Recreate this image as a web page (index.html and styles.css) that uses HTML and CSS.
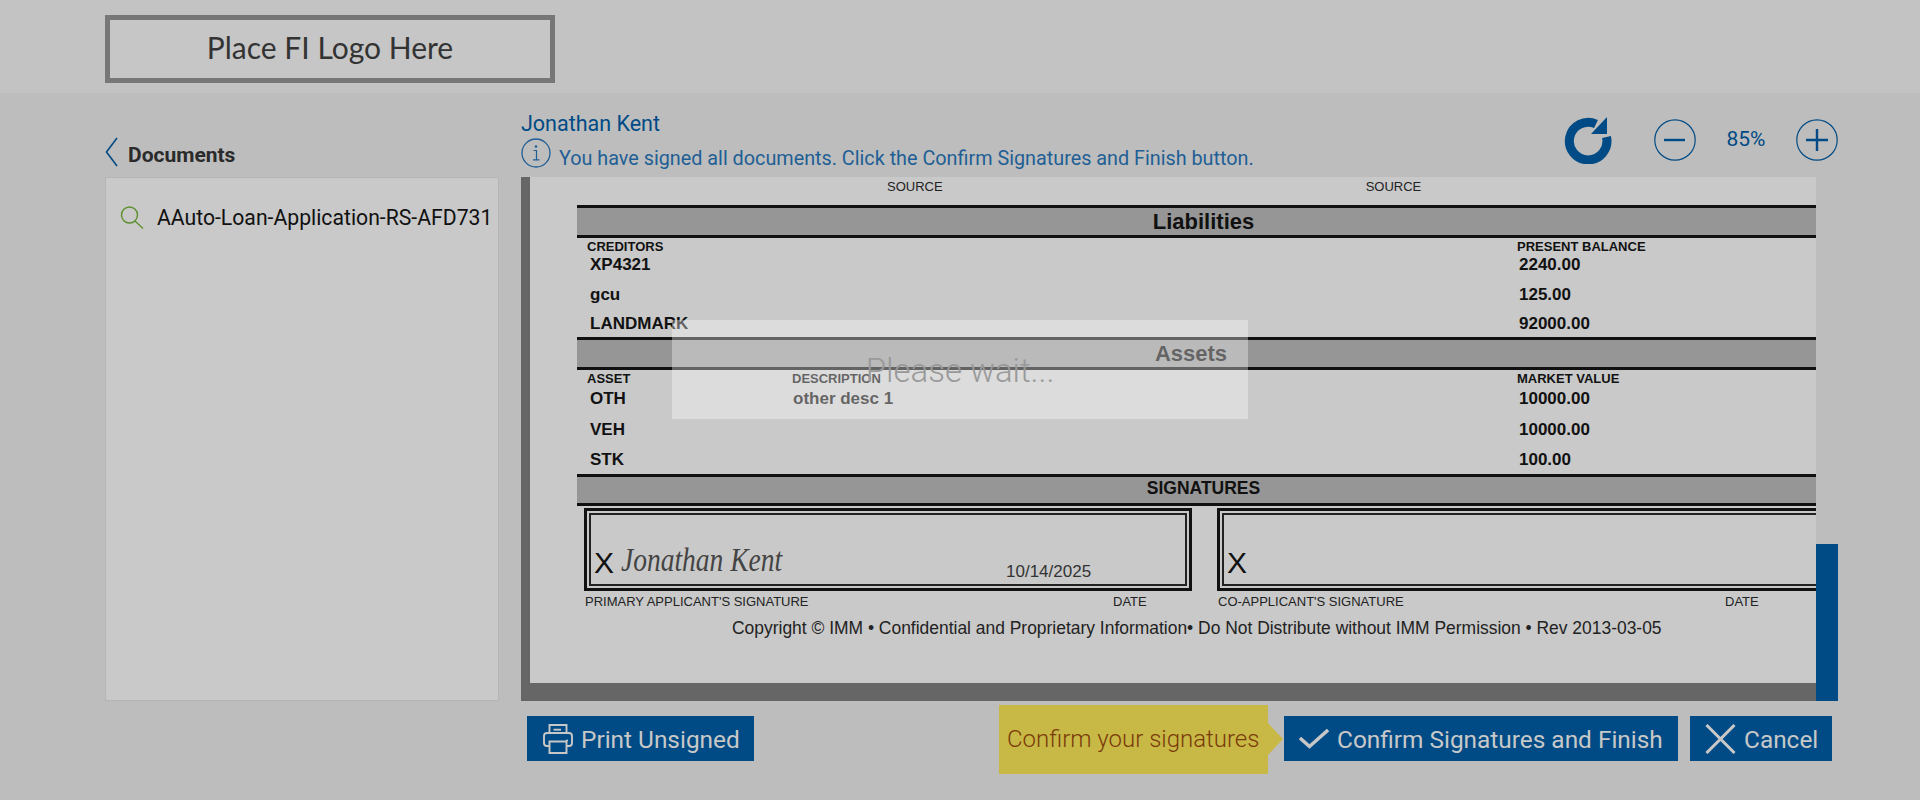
FILE: index.html
```html
<!DOCTYPE html>
<html lang="en">

<head>
    <meta charset="UTF-8">
    <meta name="viewport" content="width=device-width, initial-scale=1.0">
    <title>Sign Documents</title>

    <link rel="stylesheet" href="styles.css">
</head>

<body>
    <header class="topBar">
        <div class="logoBox">Place FI Logo Here</div>
    </header>

    <div class="mainArea">
        <!-- left column -->
        <aside class="sideCol">
            <div class="sideHead">
                <svg class="backIcon" width="13" height="30" viewBox="0 0 13 30">
                    <path d="M12 1 L1.5 15 L12 29" fill="none" stroke="#004b85" stroke-width="1.6" />
                </svg>
                <span>Documents</span>
            </div>
            <div class="docList">
                <div class="docItem">
                    <svg width="24" height="23" viewBox="0 0 24 23">
                        <circle cx="9.5" cy="9" r="8" fill="none" stroke="#5d8f2e" stroke-width="1.4" />
                        <path d="M15 15 L23 22.5" fill="none" stroke="#5d8f2e" stroke-width="1.4" />
                    </svg>
                    <span>AAuto-Loan-Application-RS-AFD731</span>
                </div>
            </div>
        </aside>

        <!-- right column -->
        <section class="viewCol">
            <div class="viewHead">
                <div class="signerInfo">
                    <div class="signerName">Jonathan Kent</div>
                    <div class="signerMsg">
                        <svg width="30" height="30" viewBox="0 0 30 30">
                            <circle cx="15" cy="15" r="14" fill="none" stroke="#1f5f95" stroke-width="1.3" />
                            <circle cx="15" cy="8.5" r="1.3" fill="#1f5f95" />
                            <path d="M12.5 12.5 H15.5 V21.5 M12 21.8 H18.5" fill="none" stroke="#1f5f95" stroke-width="1.2" />
                        </svg>
                        <span>You have signed all documents. Click the Confirm Signatures and Finish button.</span>
                    </div>
                </div>
                <div class="zoomTools">
                    <svg class="refreshIcon" width="48" height="47" viewBox="0 0 48 47">
                        <path d="M42.5 20 A18.8 18.8 0 1 1 32 7" fill="none" stroke="#004b85" stroke-width="9" />
                        <path d="M43 0 V17 H27 Z" fill="#004b85" />
                    </svg>
                    <svg class="zoomBtn" width="42" height="42" viewBox="0 0 42 42">
                        <circle cx="21" cy="21" r="20.2" fill="none" stroke="#004b85" stroke-width="1.2" />
                        <path d="M10 21 H31" stroke="#004b85" stroke-width="2.4" />
                    </svg>
                    <span class="zoomText">85%</span>
                    <svg class="zoomBtn" width="42" height="42" viewBox="0 0 42 42">
                        <circle cx="21" cy="21" r="20.2" fill="none" stroke="#004b85" stroke-width="1.2" />
                        <path d="M10 21 H32 M21 10 V32" stroke="#004b85" stroke-width="2.4" />
                    </svg>
                </div>
            </div>

            <div class="viewer">
                <div class="docPage">
                    <div class="sourceRow">
                        <span>SOURCE</span>
                        <span>SOURCE</span>
                    </div>

                    <div class="band bandBig bandLiab">Liabilities</div>
                    <div class="labelRow">
                        <span>CREDITORS</span>
                        <span></span>
                        <span>PRESENT BALANCE</span>
                    </div>
                    <div class="valueRows">
                        <div class="valueRow"><span>XP4321</span><span></span><span>2240.00</span></div>
                        <div class="valueRow"><span>gcu</span><span></span><span>125.00</span></div>
                        <div class="valueRow"><span>LANDMARK</span><span></span><span>92000.00</span></div>
                    </div>

                    <div class="band bandBig bandAssets">Assets</div>
                    <div class="labelRow">
                        <span>ASSET</span>
                        <span>DESCRIPTION</span>
                        <span>MARKET VALUE</span>
                    </div>
                    <div class="valueRows assetRows">
                        <div class="valueRow"><span>OTH</span><span>other desc 1</span><span>10000.00</span></div>
                        <div class="valueRow"><span>VEH</span><span></span><span>10000.00</span></div>
                        <div class="valueRow"><span>STK</span><span></span><span>100.00</span></div>
                    </div>

                    <div class="band bandSmall">SIGNATURES</div>
                    <div class="sigRow">
                        <div class="sigBox">
                            <div class="sigInner">
                                <span class="sigX">X</span>
                                <span class="sigHand">Jonathan Kent</span>
                                <span class="sigDate">10/14/2025</span>
                            </div>
                        </div>
                        <div class="sigBox sigBoxWide">
                            <div class="sigInner">
                                <span class="sigX">X</span>
                            </div>
                        </div>
                    </div>
                    <div class="sigLabels">
                        <span class="sigLabelA">PRIMARY APPLICANT'S SIGNATURE</span>
                        <span class="sigLabelB">DATE</span>
                        <span class="sigLabelC">CO-APPLICANT'S SIGNATURE</span>
                        <span class="sigLabelD">DATE</span>
                    </div>
                    <div class="copyRow">Copyright © IMM • Confidential and Proprietary Information• Do Not Distribute without IMM Permission • Rev 2013-03-05</div>
                </div>

                <div class="scrollTrack">
                    <div class="scrollThumb"></div>
                </div>

                <!-- loading box over the document -->
                <div class="waitBox">Please wait...</div>
            </div>

            <div class="actionRow">
                <button class="actionBtn printBtn">
                    <svg width="30" height="30" viewBox="0 0 30 30">
                        <g fill="none" stroke="#c8c8c8" stroke-width="1.9">
                            <path d="M6.5 9 V1 H23.5 V9" />
                            <path d="M6.5 22 H4 Q1 22 1 19 V12 Q1 9 4 9 H26 Q29 9 29 12 V19 Q29 22 26 22 H23.5" />
                            <path d="M6.5 17.5 H23.5 V29 H6.5 Z" />
                            <path d="M10.5 5.7 H18" />
                        </g>
                        <circle cx="24" cy="16.5" r="1.1" fill="#c8c8c8" />
                    </svg>
                    <span>Print Unsigned</span>
                </button>

                <div class="tipBox">Confirm your signatures</div>

                <button class="actionBtn confirmBtn">
                    <svg width="30" height="21" viewBox="0 0 30 21">
                        <path d="M1 10 L10.5 18.5 L29 2" fill="none" stroke="#c8c8c8" stroke-width="3.4" />
                    </svg>
                    <span>Confirm Signatures and Finish</span>
                </button>
                <button class="actionBtn cancelBtn">
                    <svg width="31" height="30" viewBox="0 0 31 30">
                        <path d="M1.5 1 L29.5 29 M29.5 1 L1.5 29" fill="none" stroke="#c8c8c8" stroke-width="3" />
                    </svg>
                    <span>Cancel</span>
                </button>
            </div>
        </section>
    </div>
</body>

</html>
```

FILE: styles.css
```css
* {
    box-sizing: border-box;
}

html,
body {
    margin: 0;
    height: 100%;
}

body {
    background-color: #bdbdbd;
    font-family: Roboto, "Liberation Sans", sans-serif;
    overflow: hidden;
}

/* top bar */
.topBar {
    height: 93px;
    padding: 15px 0 0 105px;
    background-color: #c3c3c3;
}

.logoBox {
    width: 450px;
    height: 68px;
    border: 5px solid #777;
    background-color: #c6c6c6;
    display: flex;
    align-items: center;
    justify-content: center;
    padding-bottom: 4px;
    color: #333;
    font-family: Lato, sans-serif;
    font-size: 30px;
}

.mainArea {
    display: flex;
    padding-left: 105px;
    gap: 22px;
}

/* left column */
.sideCol {
    width: 394px;
}

.sideHead {
    height: 84px;
    display: flex;
    align-items: flex-end;
    gap: 10px;
    padding-bottom: 10px;
    color: #2b2b2b;
    font-size: 21px;
    font-weight: 700;
}

.sideHead span {
    line-height: 24px;
}

.docList {
    height: 524px;
    border: 1px solid #b5b5b5;
    background-color: #c9c9c9;
    padding: 27px 0 0 14px;
}

.docItem {
    display: flex;
    align-items: center;
    gap: 13px;
    font-size: 21.2px;
    color: #111;
}

/* right column */
.viewCol {
    width: 1317px;
}

.viewHead {
    height: 84px;
    display: flex;
    justify-content: space-between;
}

.signerName {
    padding-top: 19px;
    height: 45px;
    line-height: 24px;
    font-size: 21.5px;
    color: #004b85;
}

.signerMsg {
    display: flex;
    align-items: flex-start;
    gap: 8px;
    color: #1f5f95;
    font-size: 19.8px;
}

.signerMsg span {
    padding-top: 10px;
    line-height: 22px;
}

.zoomTools {
    display: flex;
    align-items: flex-start;
    padding-top: 24px;
}

.refreshIcon {
    margin-right: 42px;
}

.zoomBtn {
    margin-top: 2px;
}

.zoomText {
    width: 100px;
    text-align: center;
    line-height: 44px;
    font-size: 21px;
    color: #004b85;
}

.viewer {
    position: relative;
    height: 524px;
    display: flex;
}

.docPage {
    width: 1295px;
    border-left: 9px solid #666;
    border-bottom: 18px solid #666;
    background-color: #c9c9c9;
    padding-left: 47px;
    overflow: hidden;
    font-family: "Liberation Sans", Arial, sans-serif;
    color: #111;
}

.sourceRow {
    height: 28px;
    display: flex;
    gap: 423px;
    padding-left: 310px;
    line-height: 20px;
    font-size: 13px;
    color: #222;
}

.band {
    border-top: 3px solid #111;
    border-bottom: 3px solid #111;
    background-color: #969696;
    font-weight: 700;
    display: flex;
    align-items: center;
    justify-content: center;
}

.bandBig {
    height: 33px;
    font-size: 22px;
}

.bandLiab {
    padding: 1px 0 0 14px;
}

.bandAssets {
    padding: 1px 11px 0 0;
}

.bandSmall {
    height: 32px;
    padding: 0 0 3px 14px;
    font-size: 17.5px;
}

.labelRow,
.valueRow {
    display: grid;
    padding-left: 10px;
}

.labelRow {
    grid-template-columns: 205px 725px 1fr;
    height: 18px;
    line-height: 18px;
    font-size: 13px;
    font-weight: 700;
}

.valueRows {
    display: flex;
    flex-direction: column;
    gap: 11.5px;
    height: 81px;
}

.assetRows {
    gap: 12.5px;
    height: 86px;
    padding-top: 2px;
}

.valueRow {
    grid-template-columns: 204px 725px 1fr;
    height: 18px;
    line-height: 18px;
    font-size: 17px;
    font-weight: 700;
    padding-left: 13px;
}

.valueRow span:nth-child(2) {
    margin-left: -1px;
}

/* signature boxes */
.sigRow {
    display: flex;
    gap: 25px;
    padding: 2px 0 0 7px;
}

.sigBox {
    width: 608px;
    height: 83px;
    flex: none;
    border: 3px solid #111;
    padding: 2px;
}

.sigBoxWide {
    width: 700px;
}

.sigInner {
    height: 100%;
    border: 2px solid #222;
    display: flex;
    align-items: flex-end;
    padding-left: 3px;
    position: relative;
}

.sigX {
    font-size: 30px;
    line-height: 32px;
    margin-bottom: 5px;
}

.sigHand {
    position: absolute;
    left: 30px;
    top: 27px;
    font-family: "Liberation Serif", serif;
    font-style: italic;
    font-size: 27.5px;
    line-height: 36px;
    white-space: nowrap;
    color: #444;
    transform: scaleY(1.25);
}

.sigDate {
    position: absolute;
    left: 415px;
    top: 47px;
    font-size: 17px;
    line-height: 20px;
    color: #333;
}

.sigLabels {
    display: flex;
    height: 20px;
    padding: 3px 0 0 8px;
    line-height: 16px;
    font-size: 13px;
    color: #222;
}

.sigLabelA {
    width: 528px;
}

.sigLabelB {
    width: 105px;
}

.sigLabelC {
    width: 507px;
}

.copyRow {
    margin: 6px 0 0 155px;
    line-height: 22px;
    font-size: 17.45px;
    white-space: nowrap;
    color: #222;
}

.scrollTrack {
    width: 22px;
    display: flex;
    align-items: flex-end;
}

.scrollThumb {
    width: 100%;
    height: 157px;
    background-color: #004b85;
}

.waitBox {
    position: absolute;
    left: 151px;
    top: 143px;
    width: 576px;
    height: 99px;
    background-color: rgba(255, 255, 255, 0.35);
    display: flex;
    align-items: center;
    justify-content: center;
    padding-top: 2px;
    font-size: 33px;
    font-weight: 300;
    color: #999;
}

/* buttons under the viewer */
.actionRow {
    display: flex;
    align-items: flex-start;
    padding: 0 6px;
}

.actionBtn {
    height: 45px;
    margin-top: 15px;
    border: none;
    background-color: #004b85;
    color: #c8c8c8;
    display: flex;
    align-items: center;
    font-family: Roboto, sans-serif;
    font-size: 24.4px;
    white-space: nowrap;
}

.actionBtn span {
    padding-top: 2px;
}

.printBtn {
    width: 227px;
    padding: 0 0 0 16px;
    gap: 8px;
}

.tipBox {
    position: relative;
    width: 269px;
    height: 69px;
    margin: 4px 16px 0 auto;
    padding-left: 8px;
    background-color: #c8b846;
    color: #7a3b0a;
    font-size: 24px;
    font-weight: 300;
    line-height: 69px;
    white-space: nowrap;
}

.tipBox::after {
    content: "";
    position: absolute;
    left: 100%;
    top: 18px;
    border-left: 15px solid #c8b846;
    border-top: 16px solid transparent;
    border-bottom: 16px solid transparent;
}

.confirmBtn {
    width: 394px;
    padding: 0 0 0 15px;
    gap: 8px;
}

.cancelBtn {
    width: 142px;
    margin-left: 12px;
    padding: 0 0 0 15px;
    gap: 8px;
}
```
